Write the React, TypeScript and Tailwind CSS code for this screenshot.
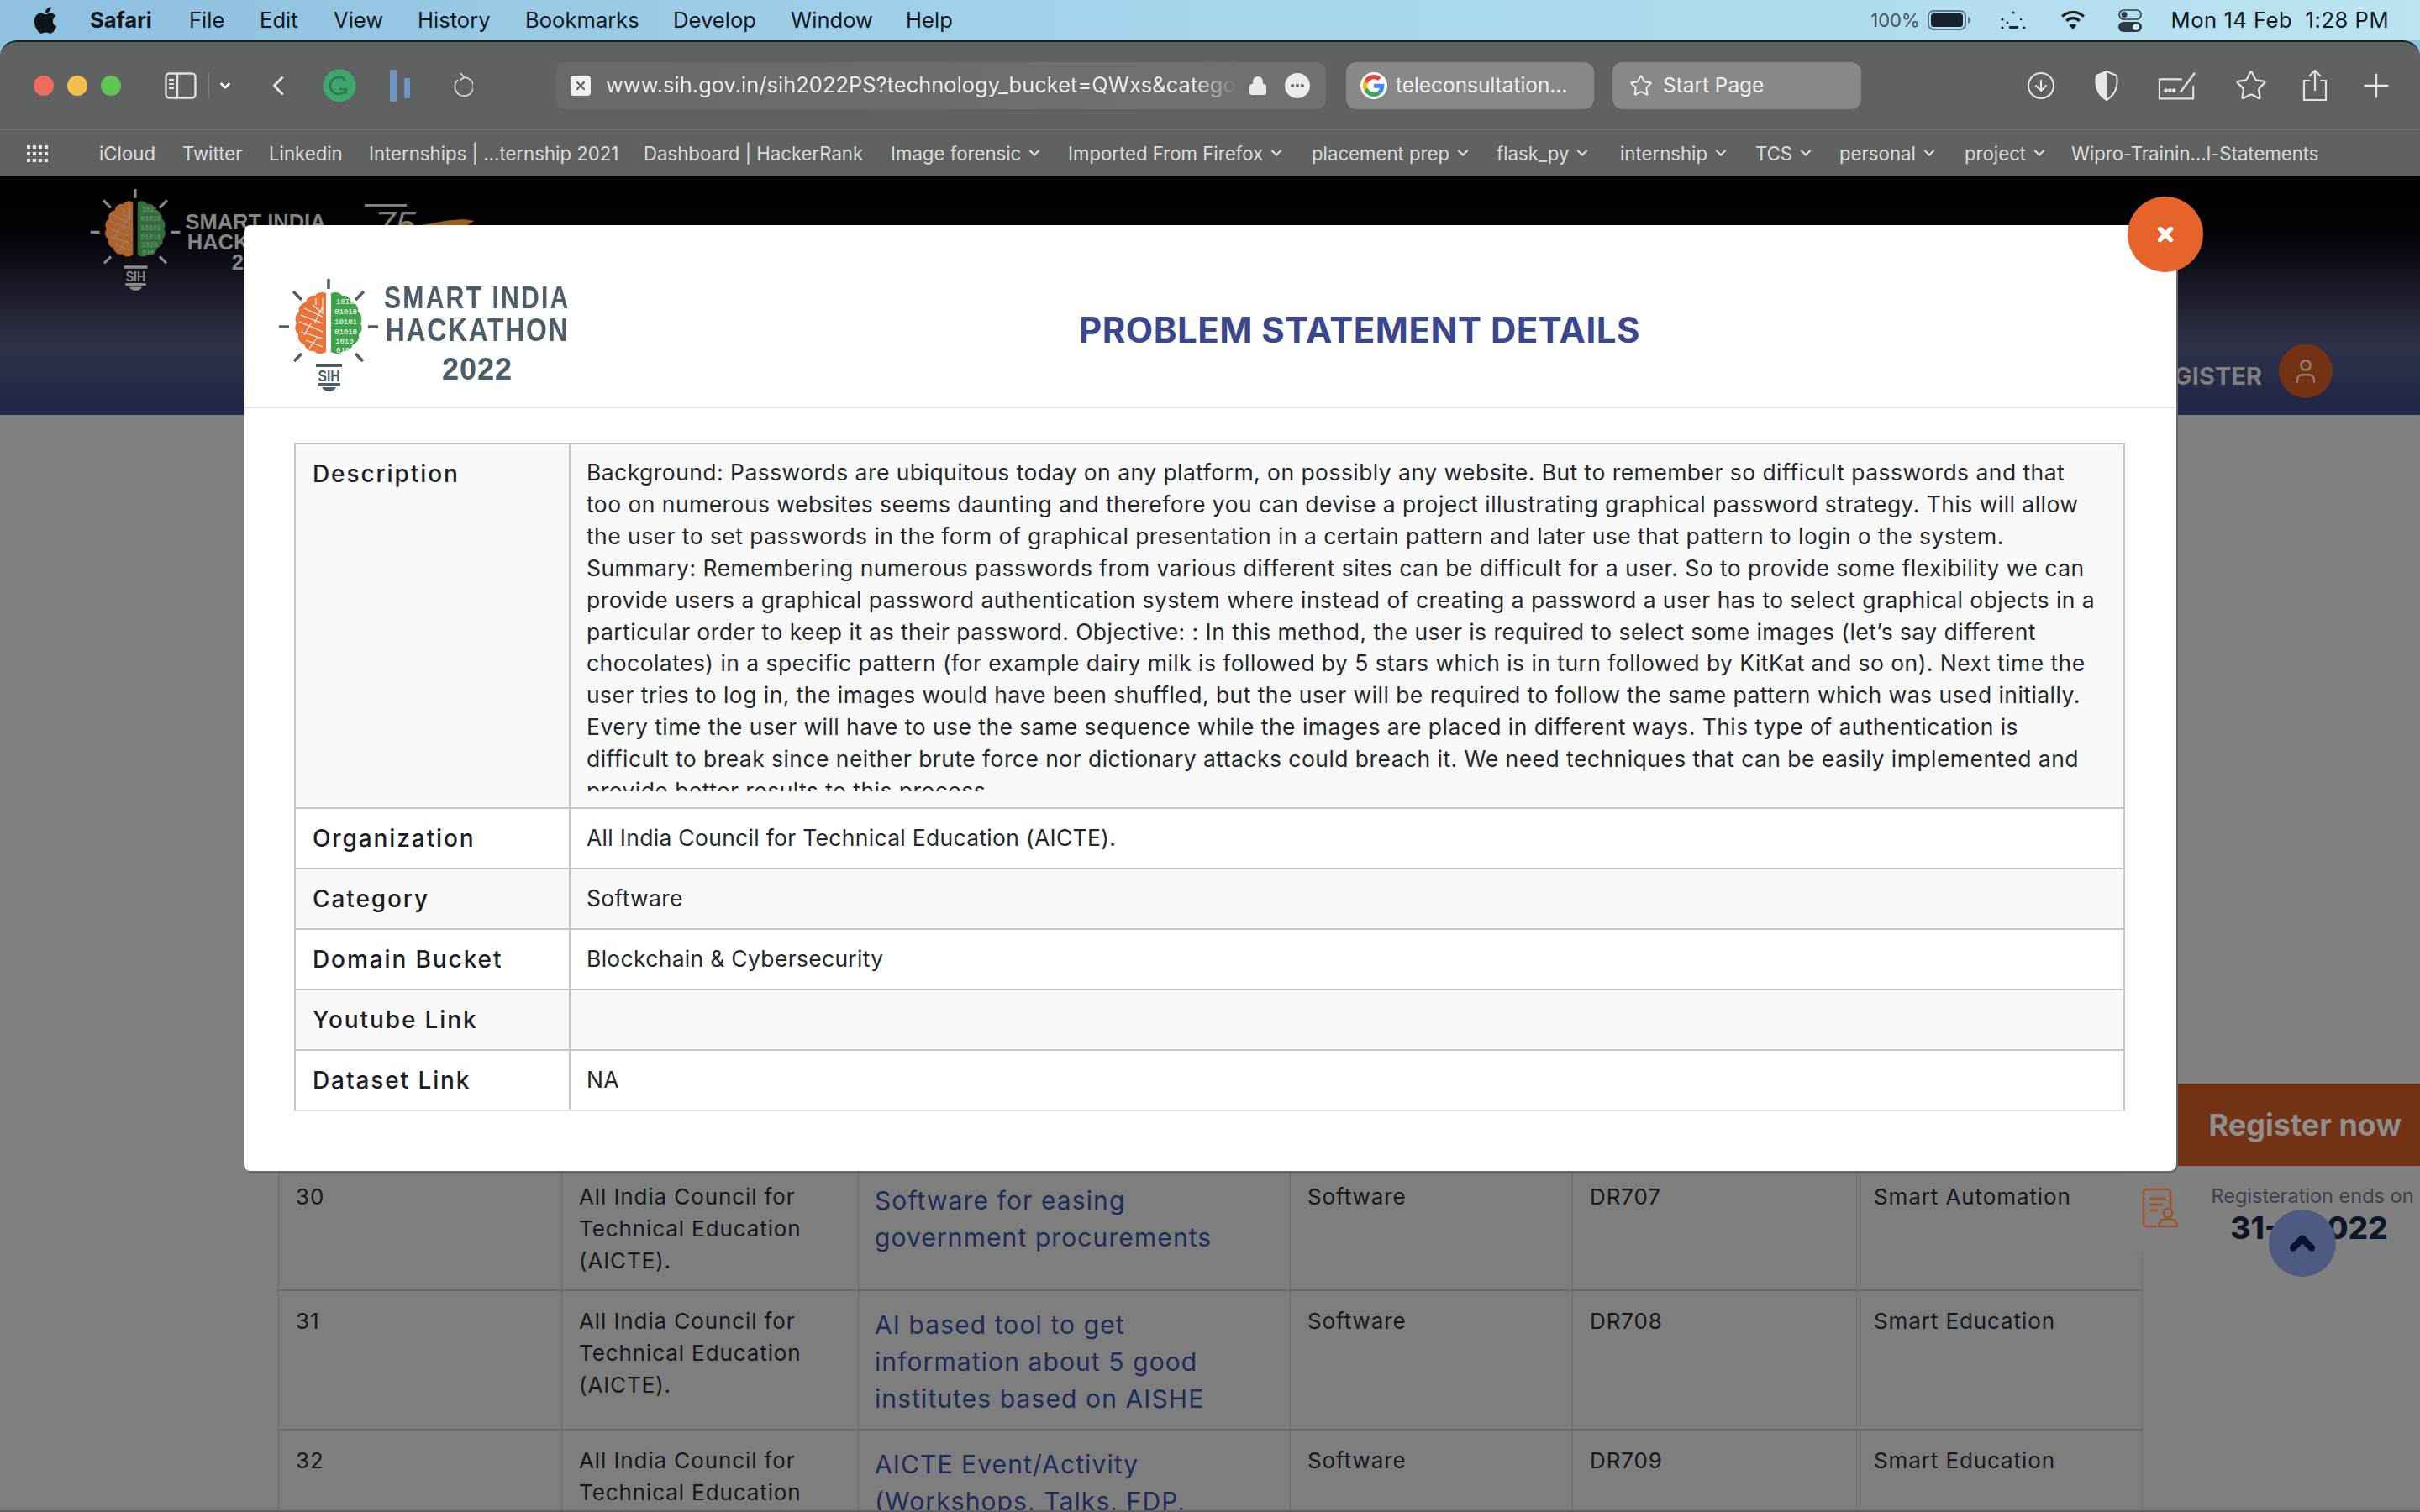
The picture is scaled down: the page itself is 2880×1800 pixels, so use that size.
import React from 'react';
import { FaApple } from 'react-icons/fa';
import { ChevronDown, ChevronLeft, ChevronUp, Plus, Star, User, X, CircleArrowDown, Lock, Ellipsis } from 'lucide-react';

function Bulb({ w, h, orange, green, gray, line }: { w: number; h: number; orange: string; green: string; gray: string; line: string }) {
  const half = 'M56 18c-6-2-10-1-13 3c-6-1-10 3-11 8c-6 1-9 6-8 11c-4 3-6 9-3 14c-3 4-2 10 2 13c-1 6 2 10 7 12c2 6 7 9 12 8c3 4 9 4 14 1z';
  return (
    <svg width={w} height={h} viewBox="0 0 118 135" className="shrink-0" fill="none">
      <g stroke={gray} strokeWidth="3.5">
        <path d="M59 1v12M0 58h12M106 58h12M17 16l10 10M101 16l-10 10M18 99l9-9M100 99l-9-9" />
      </g>
      <path d={half} fill={orange} />
      <g stroke={line} strokeWidth="1.1">
        <path d="M52 24v18l-12-10M52 46L30 36M52 54L26 44M52 64L24 52M52 72L26 64M52 82L32 74M44 32v-8M38 54l-8 14M46 70l-10 14M52 34l-10 20" />
      </g>
      <path d={half} fill={green} transform="translate(118 0) scale(-1 1)" />
      <g fill={line} fontFamily="Liberation Mono, monospace" fontSize="9">
        <text x="68" y="31">10IL</text>
        <text x="66" y="43">01010</text>
        <text x="66" y="55">10101</text>
        <text x="66" y="67">01010</text>
        <text x="67" y="78">1010</text>
        <text x="68" y="89">010</text>
      </g>
      <rect x="44" y="102" width="31" height="4" fill={gray} />
      <text x="59.5" y="123" textAnchor="middle" fill={gray} fontFamily="Liberation Sans, sans-serif" fontWeight="700" fontSize="19" textLength="26" lengthAdjust="spacingAndGlyphs">SIH</text>
      <rect x="46" y="125" width="27" height="3.5" fill={gray} />
      <path d="M51 130h17c-2 4-5 5-8 5s-7-1-9-5z" fill={gray} />
    </svg>
  );
}

function MenuBar() {
  return (
    <div className="flex h-[48px] items-center bg-gradient-to-r from-[#8ec0e0] via-[#a6d5ec] to-[#bbe3f1] text-[25.6px] leading-none text-[#10181e] font-['Inter',sans-serif]">
      <FaApple className="ml-[36px] text-[36px] text-[#0e1418]" />
      <span className="ml-[35px] w-[118px] font-bold">Safari</span>
      <span className="w-[84px]">File</span>
      <span className="w-[88px]">Edit</span>
      <span className="w-[100px]">View</span>
      <span className="w-[128px]">History</span>
      <span className="w-[176px]">Bookmarks</span>
      <span className="w-[140px]">Develop</span>
      <span className="w-[137px]">Window</span>
      <span>Help</span>
      <div className="ml-auto flex items-center">
        <span className="text-[22px] text-[#3e5460]">100%</span>
        <svg width="52" height="26" viewBox="0 0 52 26" className="ml-[9px]">
          <rect x="1" y="2" width="44" height="22" rx="6" fill="none" stroke="#5f7a88" strokeWidth="2" />
          <rect x="4" y="5" width="38" height="16" rx="3.5" fill="#16202a" />
          <path d="M48 9c2 1 3 2 3 4s-1 3-3 4z" fill="#5f7a88" />
        </svg>
        <svg width="32" height="26" viewBox="0 0 32 26" className="ml-[34px]" fill="#1c2a33">
          <circle cx="3" cy="12" r="1.6" /><circle cx="3" cy="22" r="1.6" /><circle cx="9" cy="16" r="1.4" /><circle cx="16" cy="4" r="1.6" /><rect x="11" y="20" width="11" height="3" rx="1" /><circle cx="29" cy="22" r="1.6" /><circle cx="25" cy="12" r="1.2" />
        </svg>
        <svg width="34" height="24" viewBox="0 0 34 28" className="ml-[38px]" fill="none" stroke="#111b22" strokeWidth="3.6">
          <path d="M2 9c8-8 22-8 30 0M8 15c5-5 13-5 18 0" />
          <path d="M17 27l-5-6c3-2 7-2 10 0z" fill="#111b22" stroke="none" />
        </svg>
        <svg width="28" height="27" viewBox="0 0 28 27" className="ml-[37px]">
          <rect x="1" y="1" width="26" height="11" rx="5.5" fill="none" stroke="#2f3b44" strokeWidth="1.6" />
          <circle cx="7" cy="6.500" r="3.500" fill="#2f3b44" />
          <rect x="0" y="15" width="28" height="12" rx="6" fill="#2f3b44" />
          <circle cx="21" cy="21" r="3.800" fill="#d7edf5" />
        </svg>
        <span className="ml-[35px] mr-[37px] text-[#10181e] tracking-[0.5px]">Mon 14 Feb&nbsp;&nbsp;1:28 PM</span>
      </div>
    </div>
  );
}

function Toolbar() {
  return (
    <div className="flex h-[105px] items-center border-b-2 border-[#6f7070] text-[#e6e6e6]">
      <span className="ml-[40px] h-[24px] w-[24px] rounded-full bg-[#ef6a5e]" />
      <span className="ml-[16px] h-[24px] w-[24px] rounded-full bg-[#f5bf4f]" />
      <span className="ml-[16px] h-[24px] w-[24px] rounded-full bg-[#5fc553]" />
      <svg width="38" height="32" viewBox="0 0 38 32" className="ml-[52px]" fill="none" stroke="#e2e2e2" strokeWidth="2.4">
        <rect x="1.5" y="1.5" width="35" height="29" rx="4" />
        <path d="M15 2v28" />
        <path d="M5 9h6M5 14h6M5 19h6" strokeWidth="2" />
      </svg>
      <span className="ml-[14px] h-[32px] w-px bg-[#7d7e7e]" />
      <ChevronDown size={18} strokeWidth={3.4} className="ml-[10px] text-white" />
      <ChevronLeft size={38} strokeWidth={1.8} className="ml-[35px]" />
      <svg width="40" height="40" viewBox="0 0 40 40" className="ml-[34px]" fill="none">
        <circle cx="20" cy="20" r="19.5" fill="#3fa76c" />
        <path d="M27 14a10 10 0 1 0 1 10h-8" stroke="#2f7a55" strokeWidth="2.6" />
        <path d="M28 24l-1 6" stroke="#2f7a55" strokeWidth="2.6" />
      </svg>
      <svg width="26" height="38" viewBox="0 0 26 38" className="ml-[40px]" fill="#6f95c4">
        <rect x="0" y="0" width="8" height="38" rx="1" />
        <rect x="17" y="10" width="7" height="24" rx="1" />
      </svg>
      <svg width="26" height="32" viewBox="0 0 26 32" className="ml-[47px]" fill="none" stroke="#dedede" strokeWidth="1.6">
        <path d="M15 6.200a11 11 0 1 1-7 2.800" />
        <path d="M11 1l4.500 5-5 3.500" />
      </svg>
      <div className="ml-[98px] flex h-[56px] w-[917px] items-center rounded-[12px] bg-gradient-to-r from-[#686969] to-[#707171] pl-[18px]">
        <span className="flex h-[24px] w-[24px] items-center justify-center rounded-[4px] bg-[#f0f0f0]">
          <X size={16} strokeWidth={3.5} className="text-[#5f6060]" />
        </span>
        <span className="ml-[18px] w-[752px] overflow-hidden whitespace-nowrap text-[25.5px] text-[#ececec] [mask-image:linear-gradient(to_right,black_93%,transparent)] font-['Inter',sans-serif]">www.sih.gov.in/sih2022PS?technology_bucket=QWxs&amp;category=Software</span>
        <Lock size={24} className="ml-[12px] fill-[#eaeaea] text-[#eaeaea]" />
        <span className="ml-[20px] flex h-[30px] w-[30px] items-center justify-center rounded-full bg-[#ececec]">
          <Ellipsis size={20} strokeWidth={3} className="text-[#5e5f5f]" />
        </span>
      </div>
      <div className="ml-[24px] flex h-[56px] w-[295px] items-center rounded-[12px] bg-[#878888] pl-[17px]">
        <span className="flex h-[32px] w-[32px] items-center justify-center rounded-full bg-white">
          <svg width="26" height="26" viewBox="0 0 48 48">
            <path fill="#EA4335" d="M24 9.500c3.500 0 6.700 1.200 9.200 3.600l6.900-6.900C35.900 2.400 30.500 0 24 0 14.600 0 6.500 5.400 2.600 13.200l8 6.200C12.400 13.700 17.700 9.500 24 9.500z" />
            <path fill="#4285F4" d="M46.900 24.500c0-1.600-.1-3.100-.4-4.500H24v9h12.900c-.6 3-2.200 5.500-4.700 7.200l7.700 6c4.500-4.200 7-10.300 7-17.700z" />
            <path fill="#FBBC05" d="M10.500 28.600c-.5-1.400-.8-3-.8-4.600s.3-3.200.8-4.600l-8-6.200C.9 16.500 0 20.100 0 24s.9 7.500 2.600 10.800z" />
            <path fill="#34A853" d="M24 48c6.500 0 11.900-2.100 15.900-5.800l-7.700-6c-2.200 1.500-4.900 2.300-8.200 2.300-6.300 0-11.600-4.200-13.500-9.900l-8 6.200C6.500 42.600 14.600 48 24 48z" />
          </svg>
        </span>
        <span className="ml-[10px] text-[24.4px] text-[#f2f2f2] font-['Inter',sans-serif]">teleconsultation...</span>
      </div>
      <div className="ml-[22px] flex h-[56px] w-[296px] items-center rounded-[12px] bg-[#878888] pl-[20px]">
        <Star size={28} strokeWidth={1.6} className="text-[#f2f2f2]" />
        <span className="ml-[12px] text-[24.4px] text-[#f2f2f2] font-['Inter',sans-serif]">Start Page</span>
      </div>
      <CircleArrowDown size={36} strokeWidth={1.4} className="ml-[196px] text-[#e6e6e6]" />
      <svg width="28" height="36" viewBox="0 0 28 36" className="ml-[46px]">
        <path d="M14 1l12 5c2 12 0 22-12 29C2 28 0 18 2 6z" fill="none" stroke="#e6e6e6" strokeWidth="2" />
        <path d="M14 1L2 6c-2 12 0 22 12 29z" fill="#e6e6e6" />
      </svg>
      <svg width="46" height="36" viewBox="0 0 48 36" className="ml-[47px]" fill="none" stroke="#e2e2e2" strokeWidth="2.2">
        <path d="M30 10H2v24h42V18" />
        <path d="M28 26L46 2" strokeWidth="2.6" />
        <circle cx="10" cy="24" r="1.400" fill="#e2e2e2" /><circle cx="15" cy="24" r="1.400" fill="#e2e2e2" /><circle cx="20" cy="24" r="1.400" fill="#e2e2e2" />
      </svg>
      <Star size={40} strokeWidth={1.3} className="ml-[45px] text-[#e6e6e6]" />
      <svg width="30" height="38" viewBox="0 0 30 38" className="ml-[41px]" fill="none" stroke="#e2e2e2" strokeWidth="2.2">
        <path d="M9 13H2v23h26V13h-7M15 25V2M8 8l7-7 7 7" />
      </svg>
      <Plus size={46} strokeWidth={1.2} className="ml-[35px] text-[#e6e6e6]" />
    </div>
  );
}

function Folder({ label, cls }: { label: string; cls: string }) {
  return (
    <span className={`flex items-center ${cls}`}>
      {label}
      <ChevronDown size={20} strokeWidth={2.6} className="ml-[6px]" />
    </span>
  );
}

function Bookmarks() {
  return (
    <div className="flex h-[55px] items-center whitespace-nowrap text-[22.2px] text-[#dcdcdc] font-['Inter',sans-serif]">
      <svg width="26" height="20" viewBox="0 0 26 20" className="ml-[32px]" fill="#e6e6e6">
        <rect x="0" y="0" width="4" height="4" /><rect x="7" y="0" width="4" height="4" /><rect x="14" y="0" width="4" height="4" /><rect x="21" y="0" width="4" height="4" />
        <rect x="0" y="8" width="4" height="4" /><rect x="7" y="8" width="4" height="4" /><rect x="14" y="8" width="4" height="4" /><rect x="21" y="8" width="4" height="4" />
        <rect x="0" y="16" width="4" height="4" /><rect x="7" y="16" width="4" height="4" /><rect x="14" y="16" width="4" height="4" /><rect x="21" y="16" width="4" height="4" />
      </svg>
      <span className="ml-[60px] w-[99px]">iCloud</span>
      <span className="w-[103px]">Twitter</span>
      <span className="w-[119px]">Linkedin</span>
      <span className="w-[327px]">Internships | ...ternship 2021</span>
      <span className="w-[294px]">Dashboard | HackerRank</span>
      <Folder label="Image forensic" cls="w-[211px]" />
      <Folder label="Imported From Firefox" cls="w-[290px]" />
      <Folder label="placement prep" cls="w-[220px]" />
      <Folder label="flask_py" cls="w-[147px]" />
      <Folder label="internship" cls="w-[161px]" />
      <Folder label="TCS" cls="w-[100px]" />
      <Folder label="personal" cls="w-[149px]" />
      <Folder label="project" cls="w-[127px]" />
      <span>Wipro-Trainin...l-Statements</span>
    </div>
  );
}

function BackgroundPage() {
  const colCell = 'border-r border-[#6a6c72] pl-[20px] pt-[17px] text-[26px] leading-[38px] tracking-[0.9px] text-[#15171b]';
  const linkCell = 'border-r border-[#6a6c72] pl-[19px] pt-[18px] text-[30px] leading-[44px] tracking-[1.1px] text-[#222a58]';
  const org = (
    <>
      All India Council for
      <br />
      Technical Education
      <br />
      (AICTE).
    </>
  );
  return (
    <div className="font-['Inter',sans-serif]">
      <div className="flex h-[284px] items-start bg-gradient-to-b from-black via-[#2f3246] via-70% to-[#1f2449] pl-[107px] pt-[14px]">
        <Bulb w={108} h={122} orange="#b0622e" green="#2d6f3b" gray="#8a8a8a" line="#8e8e7e" />
        <div className="ml-[3px] mt-[28px] flex w-[172px] flex-col items-center whitespace-nowrap font-['Liberation_Sans',sans-serif] text-[25.5px] font-bold leading-[24px] text-[#858585]">
          <span>SMART INDIA</span>
          <span>HACKATHON</span>
          <span>2022</span>
        </div>
        <svg width="130" height="40" viewBox="0 0 130 40" className="ml-[44px] mt-[19px]" fill="none">
          <path d="M0 1h50" stroke="#7f7f7f" strokeWidth="4" />
          <text x="12" y="40" fill="#7f7f7f" fontFamily="Liberation Sans, sans-serif" fontSize="44" fontStyle="italic">75</text>
          <path d="M44 22c20 6 28 2 40 0 14-2 30-6 46-2-6 6-20 8-32 14H44z" fill="#9c5f1b" />
        </svg>
        <div className="ml-auto mr-[104px] mt-[186px] flex items-center">
          <span className="pt-[12px] text-[29px] font-bold text-[#7f7f7f]">REGISTER</span>
          <span className="ml-[20px] flex h-[64px] w-[64px] items-center justify-center rounded-full bg-[#733214]">
            <User size={34} strokeWidth={1.6} className="text-[#94806f]" />
          </span>
        </div>
      </div>
      <div className="h-[1304px] bg-[#808080] pl-[331px] pt-[895px]">
        <div className="grid w-[2218px] grid-cols-[337px_353px_514px_336px_338px_340px] border-l border-[#6a6c72] bg-[#7e7e7e]">
          <div className={`${colCell} h-[148px] border-b-2`}>30</div>
          <div className={`${colCell} h-[148px] border-b-2`}>{org}</div>
          <div className={`${linkCell} h-[148px] border-b-2`}>Software for easing<br />government procurements</div>
          <div className={`${colCell} h-[148px] border-b-2`}>Software</div>
          <div className={`${colCell} h-[148px] border-b-2`}>DR707</div>
          <div className={`${colCell} h-[148px] border-b-2`}>Smart Automation</div>
          <div className={`${colCell} h-[166px] border-b-2`}>31</div>
          <div className={`${colCell} h-[166px] border-b-2`}>{org}</div>
          <div className={`${linkCell} h-[166px] border-b-2`}>AI based tool to get<br />information about 5 good<br />institutes based on AISHE</div>
          <div className={`${colCell} h-[166px] border-b-2`}>Software</div>
          <div className={`${colCell} h-[166px] border-b-2`}>DR708</div>
          <div className={`${colCell} h-[166px] border-b-2`}>Smart Education</div>
          <div className={`${colCell} h-[95px] overflow-hidden`}>32</div>
          <div className={`${colCell} h-[95px] overflow-hidden`}>{org}</div>
          <div className={`${linkCell} h-[95px] overflow-hidden`}>AICTE Event/Activity<br />(Workshops, Talks, FDP,</div>
          <div className={`${colCell} h-[95px] overflow-hidden`}>Software</div>
          <div className={`${colCell} h-[95px] overflow-hidden`}>DR709</div>
          <div className={`${colCell} h-[95px] overflow-hidden`}>Smart Education</div>
        </div>
      </div>
    </div>
  );
}

function FloatingRegister() {
  return (
    <div className="absolute right-0 top-[1080px] flex w-[350px] flex-col font-['Inter',sans-serif]">
      <div className="flex h-[98px] items-center justify-end bg-[#733214] pr-[22px] text-[36px] font-bold text-[#8f8f8f]">Register now</div>
      <div className="flex h-[102px] items-start bg-[#808080] pl-[19px] pt-[26px]">
        <svg width="44" height="48" viewBox="0 0 44 48" fill="none" stroke="#a0562a" strokeWidth="2.6" className="shrink-0">
          <path d="M18 46H6a4 4 0 0 1-4-4V6a4 4 0 0 1 4-4h24a4 4 0 0 1 4 4v22" />
          <path d="M9 13h20M9 20h16M9 27h10" strokeWidth="3" />
          <circle cx="31" cy="30" r="5.500" />
          <path d="M20 46c0-7 5-9 11-9s11 2 11 9z" />
        </svg>
        <div className="ml-[38px] -mt-[4px] flex w-[242px] flex-col items-center">
          <span className="whitespace-nowrap text-[23.500px] leading-[28px] text-[#3f4148]">Registeration ends on</span>
          <span className="-ml-[8px] whitespace-nowrap text-[37px] font-extrabold leading-[48px] text-[#0f1626]">31-1-2022</span>
        </div>
      </div>
    </div>
  );
}

const lines = [
  'Background: Passwords are ubiquitous today on any platform, on possibly any website. But to remember so difficult passwords and that',
  'too on numerous websites seems daunting and therefore you can devise a project illustrating graphical password strategy. This will allow',
  'the user to set passwords in the form of graphical presentation in a certain pattern and later use that pattern to login o the system.',
  'Summary: Remembering numerous passwords from various different sites can be difficult for a user. So to provide some flexibility we can',
  'provide users a graphical password authentication system where instead of creating a password a user has to select graphical objects in a',
  'particular order to keep it as their password. Objective: : In this method, the user is required to select some images (let’s say different',
  'chocolates) in a specific pattern (for example dairy milk is followed by 5 stars which is in turn followed by KitKat and so on). Next time the',
  'user tries to log in, the images would have been shuffled, but the user will be required to follow the same pattern which was used initially.',
  'Every time the user will have to use the same sequence while the images are placed in different ways. This type of authentication is',
  'difficult to break since neither brute force nor dictionary attacks could breach it. We need techniques that can be easily implemented and',
  'provide better results to this process.',
];

function Row({ label, value, alt }: { label: string; value: string; alt?: boolean }) {
  return (
    <div className={`flex h-[72px] border-t-2 border-[#c4c7cc] ${alt ? 'bg-[#f9f9f9]' : 'bg-white'}`}>
      <div className="flex w-[327px] shrink-0 items-center border-r-2 border-[#c4c7cc] pl-[20px] text-[28px] font-medium tracking-[1.9px] text-[#1c2026]">{label}</div>
      <div className="flex items-center pl-[19px] text-[26.500px] tracking-[0.3px] text-[#24272c]">{value}</div>
    </div>
  );
}

function Modal() {
  return (
    <div className="absolute left-[290px] top-[58px] h-[1126px] w-[2300px] rounded-[8px] bg-white shadow-[2px_2px_0_#666a70] font-['Inter',sans-serif]">
      <span className="absolute -right-[32px] -top-[34px] flex h-[90px] w-[90px] items-center justify-center rounded-full bg-[#e6642c]">
        <X size={26} strokeWidth={5} className="text-white" />
      </span>
      <div className="flex h-[218px] items-start border-b-2 border-[#dee2e6] pl-[42px] pr-[44px] pt-[63px]">
        <div className="flex w-[358px] shrink-0 items-start">
          <Bulb w={118} h={135} orange="#e8743a" green="#3fa34d" gray="#4e5d6a" line="#ffffff" />
          <div className="ml-[8px] mt-[5px] flex w-[220px] flex-col items-center font-['Liberation_Sans',sans-serif] font-bold text-[#4e5d6a]">
            <span className="scale-x-[0.84] whitespace-nowrap text-[36px] leading-[38px] tracking-[2.500px]">SMART INDIA</span>
            <span className="scale-x-[0.84] whitespace-nowrap text-[38px] leading-[38px] tracking-[2px]">HACKATHON</span>
            <span className="mt-[6px] text-[36px] leading-[44px] tracking-[1px]">2022</span>
          </div>
        </div>
        <div className="flex h-[122px] flex-1 items-center justify-center text-[42px] font-bold tracking-[0.5px] text-[#3a478c]">PROBLEM STATEMENT DETAILS</div>
      </div>
      <div className="ml-[60px] mt-[41px] w-[2179px] border-x-2 border-b-2 border-[#c4c7cc] border-b-[#dee2e6]">
        <div className="flex h-[434px] border-t-2 border-[#c4c7cc] bg-[#f9f9f9]">
          <div className="w-[327px] shrink-0 border-r-2 border-[#c4c7cc] pl-[20px] pt-[16px] text-[28px] font-medium leading-[38px] tracking-[1.9px] text-[#1c2026]">Description</div>
          <div className="h-[414px] flex-1 overflow-hidden pl-[19px] pt-[15px]">
            <div className="h-[398px] overflow-hidden whitespace-nowrap text-[26.500px] leading-[37.900px] tracking-[0.45px] text-[#24272c]">
              {lines.map((l) => (
                <div key={l}>{l}</div>
              ))}
            </div>
          </div>
        </div>
        <Row label="Organization" value="All India Council for Technical Education (AICTE)." />
        <Row label="Category" value="Software" alt />
        <Row label="Domain Bucket" value="Blockchain & Cybersecurity" />
        <Row label="Youtube Link" value="" alt />
        <Row label="Dataset Link" value="NA" />
      </div>
    </div>
  );
}

export default function App() {
  return (
    <div className="relative h-[1800px] w-[2880px] overflow-hidden bg-[#8ec0e0]">
      <MenuBar />
      <div className="flex h-[1752px] flex-col overflow-hidden rounded-t-[20px] border-t-2 border-[#1b1c1c] bg-[#606161]">
        <Toolbar />
        <Bookmarks />
        <div className="relative flex-1 overflow-hidden">
          <BackgroundPage />
          <FloatingRegister />
          <span className="absolute left-[2700px] top-[1230px] flex h-[80px] w-[80px] items-center justify-center rounded-full bg-[#4f5a82]">
            <ChevronUp size={44} strokeWidth={4.5} className="text-[#06122c]" />
          </span>
          <Modal />
        </div>
      </div>
    </div>
  );
}
